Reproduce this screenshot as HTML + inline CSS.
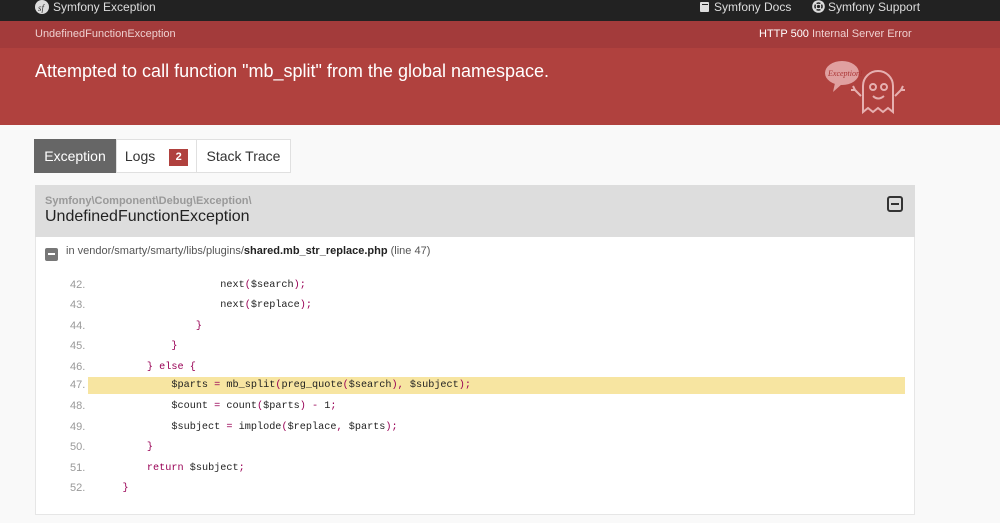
<!DOCTYPE html>
<html><head><style>
*{margin:0;padding:0;box-sizing:border-box}
body{width:1000px;height:523px;overflow:hidden;background:#f9f9f9;font-family:"Liberation Sans",Arial,sans-serif;color:#222;position:relative}
.abs{position:absolute}
.top{left:0;top:0;width:1000px;height:21px;background:#222;color:#ddd;font-size:12px}
.sub{left:0;top:21px;width:1000px;height:27px;background:#a33b3b;color:#eecfcf;font-size:11px}
.main{left:0;top:48px;width:1000px;height:77px;background:#b0413e;color:#fff}
.tab{top:139px;height:34px;font-size:14px;line-height:33px;text-align:center;border:1px solid #e0e0e0;background:#fff;color:#333}
.code{font-family:"Liberation Mono",monospace;font-size:10.2px;white-space:pre;color:#222}
.ln{position:absolute;left:70px;font-size:11px;color:#999;font-family:"Liberation Sans",sans-serif}
.p{color:#905}
</style></head><body>
<div class="abs top">
 <svg class="abs" style="left:35px;top:0px" width="14" height="14"><circle cx="7" cy="7" r="7" fill="#ddd"/><text x="3" y="11" font-size="9" font-style="italic" fill="#333" font-family="Liberation Serif">sf</text></svg>
 <span class="abs" style="left:53px;top:0px">Symfony Exception</span>
 <svg class="abs" style="left:699px;top:1px" width="11" height="12"><rect x="1" y="1" width="9" height="10" rx="1" fill="#ddd"/><rect x="3" y="3" width="6" height="1" fill="#222"/></svg>
 <span class="abs" style="left:714px;top:0px">Symfony Docs</span>
 <svg class="abs" style="left:812px;top:0px" width="13" height="13"><circle cx="6.5" cy="6.5" r="5.3" fill="none" stroke="#ddd" stroke-width="2"/><circle cx="6.5" cy="6.5" r="2.2" fill="none" stroke="#ddd" stroke-width="1.2"/><path d="M2 2L5 5M11 2L8 5M2 11L5 8M11 11L8 8" stroke="#ddd" stroke-width="1.5"/></svg>
 <span class="abs" style="left:828px;top:0px">Symfony Support</span>
</div>
<div class="abs sub">
 <span class="abs" style="left:35px;top:7px">UndefinedFunctionException</span>
 <span class="abs" style="left:759px;top:7px"><span style="color:#fff">HTTP 500</span> Internal Server Error</span>
</div>
<div class="abs main">
 <span class="abs" style="left:35px;top:13px;font-size:18px">Attempted to call function "mb_split" from the global namespace.</span>
 <svg class="abs" style="left:815px;top:8px" width="105" height="64">
  <ellipse cx="27" cy="17" rx="17" ry="12" fill="#e0a0a0"/><path d="M20 27L18 36L27 28Z" fill="#e0a0a0"/>
  <text x="13" y="20" font-size="8" font-style="italic" fill="#a33" font-family="Liberation Serif">Exception!</text>
  <path d="M48 56V30a15 15 0 0 1 30 0V56l-5-4-5 4-5-4-5 4-5-4z" fill="none" stroke="#e6b0b0" stroke-width="2"/>
  <circle cx="58" cy="31" r="3" fill="none" stroke="#e6b0b0" stroke-width="2"/><circle cx="69" cy="31" r="3" fill="none" stroke="#e6b0b0" stroke-width="2"/>
  <path d="M58 40q5 5 11 0" fill="none" stroke="#e6b0b0" stroke-width="2"/>
  <path d="M46 40l-6-6M40 34l-2-4M40 34l-4 0M80 40l6-6M86 34l2-4M86 34l4 0" stroke="#e6b0b0" stroke-width="2" fill="none"/>
 </svg>
</div>
<div class="abs tab" style="left:34px;width:82px;background:#666;color:#fff;border-color:#666">Exception</div>
<div class="abs tab" style="left:116px;width:81px">Logs <span style="display:inline-block;background:#b0413e;color:#fff;font-size:11px;font-weight:bold;width:19px;height:17px;line-height:17px;margin-left:10px;vertical-align:1px">2</span></div>
<div class="abs tab" style="left:196px;width:95px">Stack Trace</div>
<div class="abs" style="left:35px;top:185px;width:880px;height:330px;background:#fff;border:1px solid #e6e6e6"></div>
<div class="abs" style="left:35px;top:185px;width:880px;height:52px;background:#ddd">
 <span class="abs" style="left:10px;top:10px;font-size:11px;font-weight:bold;color:#999">Symfony\Component\Debug\Exception\</span>
 <span class="abs" style="left:10px;top:23px;font-size:16px">UndefinedFunctionException</span>
 <div class="abs" style="left:852px;top:11px;width:16px;height:16px;border:2px solid #333;border-radius:3px"><div style="margin:5px 2px 0;height:2px;background:#333"></div></div>
</div>
<div class="abs" style="left:45px;top:248px;width:13px;height:13px;background:#777;border-radius:2px"><div style="margin:5px 3px 0;height:2px;background:#fff"></div></div>
<span class="abs" style="left:66px;top:245px;font-size:11px;color:#555">in vendor/smarty/smarty/libs/plugins/<b style="color:#222">shared.mb_str_replace.php</b> (line 47)</span>
<div class="abs" style="left:88px;top:377px;width:817px;height:17px;background:#f7e5a1"></div>
<div class="ln" style="top:279px">42.</div><div class="abs code" style="left:98px;top:280px">                    next<span class="p">(</span>$search<span class="p">);</span></div>
<div class="ln" style="top:299px">43.</div><div class="abs code" style="left:98px;top:300px">                    next<span class="p">(</span>$replace<span class="p">);</span></div>
<div class="ln" style="top:320px">44.</div><div class="abs code p" style="left:98px;top:321px">                }</div>
<div class="ln" style="top:340px">45.</div><div class="abs code p" style="left:98px;top:341px">            }</div>
<div class="ln" style="top:361px">46.</div><div class="abs code p" style="left:98px;top:362px">        } else {</div>
<div class="ln" style="top:379px">47.</div><div class="abs code" style="left:98px;top:380px">            $parts <span class="p">=</span> mb_split<span class="p">(</span>preg_quote<span class="p">(</span>$search<span class="p">),</span> $subject<span class="p">);</span></div>
<div class="ln" style="top:400px">48.</div><div class="abs code" style="left:98px;top:401px">            $count <span class="p">=</span> count<span class="p">(</span>$parts<span class="p">) -</span> 1<span class="p">;</span></div>
<div class="ln" style="top:421px">49.</div><div class="abs code" style="left:98px;top:422px">            $subject <span class="p">=</span> implode<span class="p">(</span>$replace<span class="p">,</span> $parts<span class="p">);</span></div>
<div class="ln" style="top:441px">50.</div><div class="abs code p" style="left:98px;top:442px">        }</div>
<div class="ln" style="top:462px">51.</div><div class="abs code" style="left:98px;top:463px">        <span class="p">return</span> $subject<span class="p">;</span></div>
<div class="ln" style="top:482px">52.</div><div class="abs code p" style="left:98px;top:483px">    }</div>
</body></html>
